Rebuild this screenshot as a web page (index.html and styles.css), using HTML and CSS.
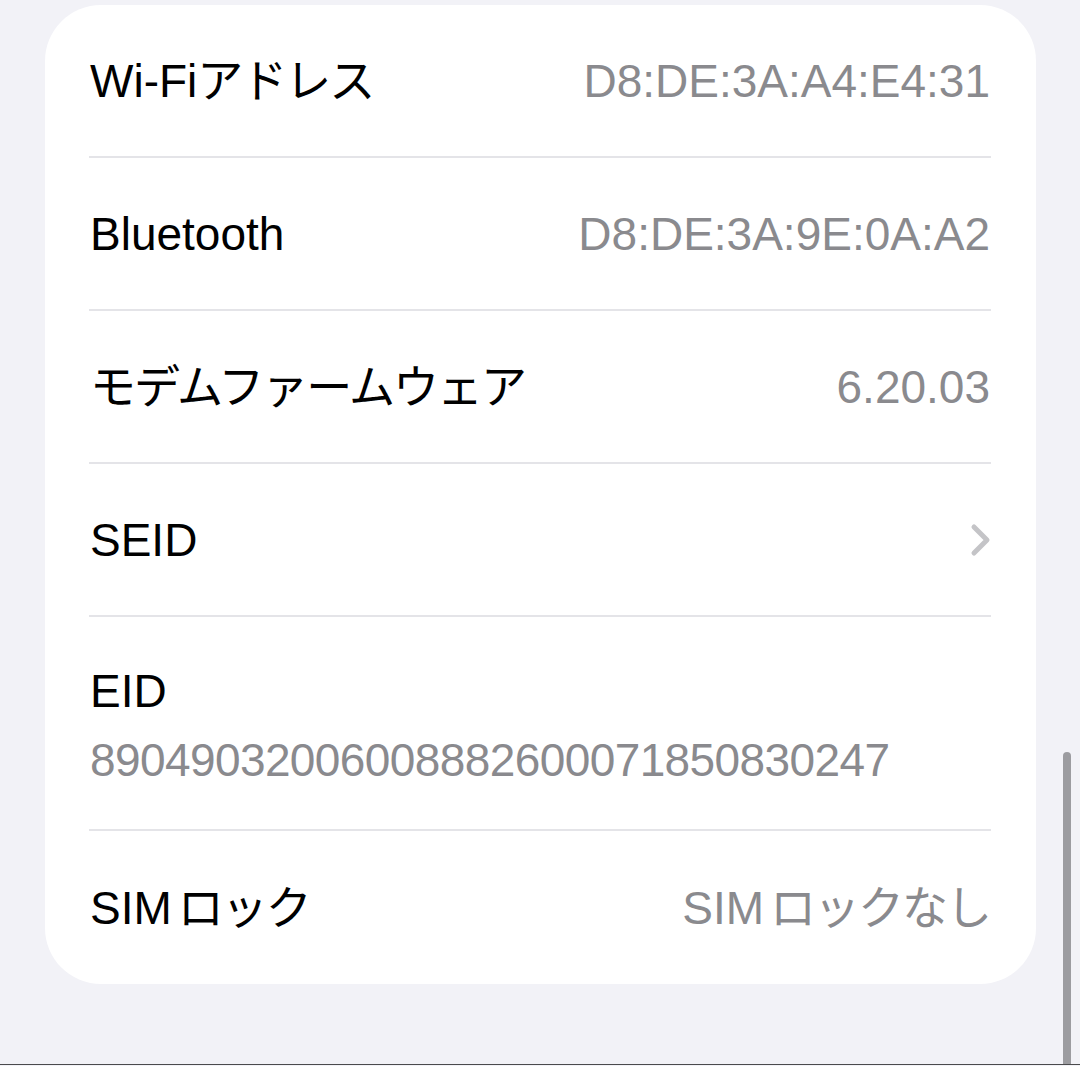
FILE: index.html
```html
<!DOCTYPE html>
<html lang="ja">
<head>
    <meta charset="UTF-8">
    <title>情報</title>
    <link rel="stylesheet" href="styles.css">
</head>
<body>
    <div class="screen">
        <div class="group">
            <div class="row">
                <div class="row-inner">
                    <span class="label">Wi-Fi<span class="ja">アドレス</span></span>
                    <span class="value">D8:DE:3A:A4:E4:31</span>
                </div>
            </div>
            <div class="row">
                <div class="row-inner">
                    <span class="label">Bluetooth</span>
                    <span class="value">D8:DE:3A:9E:0A:A2</span>
                </div>
            </div>
            <div class="row">
                <div class="row-inner">
                    <span class="label ja">モデムファームウェア</span>
                    <span class="value">6.20.03</span>
                </div>
            </div>
            <div class="row">
                <div class="row-inner">
                    <span class="label">SEID</span>
                    <svg class="chevron" width="22" height="34" viewBox="0 0 22 34">
                        <path d="M4 4 L17 17 L4 30" fill="none" stroke="#c4c4c7" stroke-width="5" stroke-linecap="round" stroke-linejoin="round"/>
                    </svg>
                </div>
            </div>
            <div class="row">
                <div class="row-inner stacked">
                    <span class="label">EID</span>
                    <span class="value">89049032006008882600071850830247</span>
                </div>
            </div>
            <div class="row last">
                <div class="row-inner">
                    <span class="label">SIM<span class="ja sep">ロック</span></span>
                    <span class="value">SIM<span class="ja sep">ロックなし</span></span>
                </div>
            </div>
        </div>
        <div class="scrollbar"></div>
    </div>
</body>
</html>
```

FILE: styles.css
```css
body {
    margin: 0;
    background-color: #f2f2f7;
    font-family: "Liberation Sans", "Noto Sans CJK JP", sans-serif;
}
.screen {
    position: relative;
    height: 1065px;
    padding: 5px 44px 0 45px;
    box-sizing: border-box;
    border-bottom: 1px solid #4a4a4c;
    overflow: hidden;
}
.group {
    background-color: #ffffff;
    border-radius: 56px;
    overflow: hidden;
}
.row-inner {
    display: flex;
    align-items: center;
    justify-content: space-between;
    height: 151px;
    margin: 0 45px 0 44px;
    padding: 0 1px;
    border-bottom: 2px solid #e4e4e8;
    font-size: 46px;
    line-height: 56px;
}
.row.last .row-inner {
    border-bottom: none;
    height: 153px;
}
.label {
    color: #000000;
}
.value {
    color: #8a8a8e;
}
.ja {
    letter-spacing: -2px;
}
.ja.sep {
    margin-left: 6px;
}
.stacked {
    flex-direction: column;
    align-items: flex-start;
    justify-content: flex-start;
    height: auto;
    padding-top: 46px;
    padding-bottom: 41px;
    gap: 13px;
}
.stacked .value {
    letter-spacing: -0.6px;
}
.chevron {
    margin-right: -2px;
}
.scrollbar {
    position: absolute;
    left: 1063px;
    top: 752px;
    width: 8px;
    height: 330px;
    border-radius: 4px;
    background-color: #9c9ca0;
}
```
